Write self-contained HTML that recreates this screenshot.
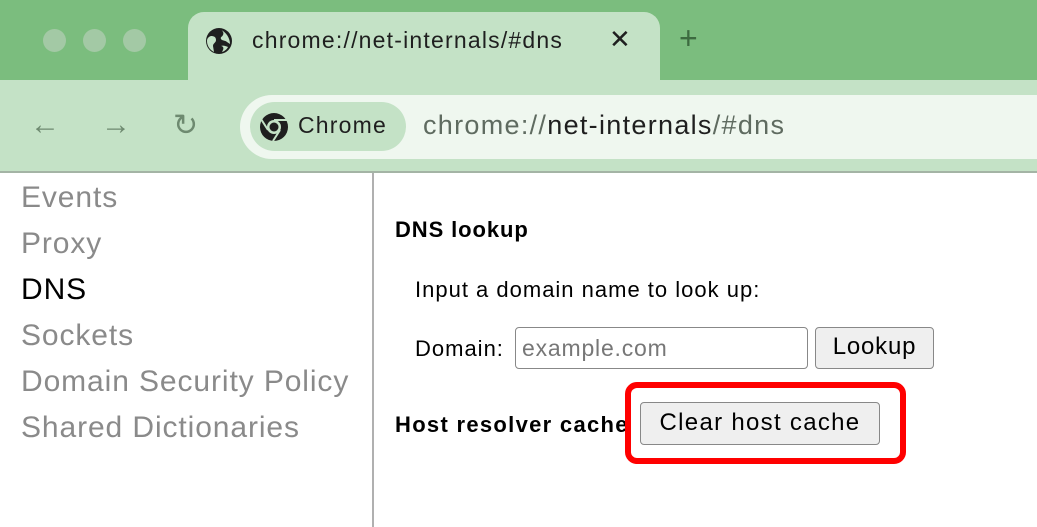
<!DOCTYPE html>
<html><head><style>
*{margin:0;padding:0;box-sizing:border-box}
body{width:1037px;height:527px;overflow:hidden;background:#fff;font-family:"Liberation Sans",sans-serif;position:relative}
.a{position:absolute;white-space:nowrap}
.dot{width:23px;height:23px;border-radius:50%;background:#a3c9a5;top:29px}
.side{left:21px;font-size:30px;letter-spacing:0.9px;color:#8a8a8a;line-height:46px}
</style></head><body>
<div class="a" style="left:0;top:0;width:1037px;height:80px;background:#7bbd7e"></div>
<div class="dot a" style="left:43px"></div><div class="dot a" style="left:83px"></div><div class="dot a" style="left:123px"></div>
<div class="a" style="left:188px;top:12px;width:472px;height:70px;background:#c4e2c6;border-radius:16px 16px 0 0"></div>
<svg class="a" style="left:205px;top:27px" width="28" height="28" viewBox="0 0 28 28"><circle cx="14" cy="14" r="13" fill="#1f1f1f"/><path d="M6 9c3 0 5 1 5 4s-3 3-3 6l1 6c-4-2-7-6-7-11 0-2 1-4 4-5zM16 3c2 1 3 3 2 5s-3 2-2 4 4 1 6 3l3 2c0-6-4-12-9-14zM16 19c2 0 3 2 2 4l-1 2c3-1 5-3 6-5-2-1-5-2-7-1z" fill="#c4e2c6"/></svg>
<div class="a" style="left:252px;top:27px;font-size:23px;letter-spacing:1.2px;color:#1f1f1f">chrome://net-internals/#dns</div>
<div class="a" style="left:609px;top:24px;font-size:26px;color:#1f1f1f">✕</div>
<div class="a" style="left:679px;top:20px;font-size:32px;color:#3d6b40">+</div>
<div class="a" style="left:0;top:80px;width:1037px;height:92px;background:#c4e2c6"></div>
<div class="a" style="left:0;top:171px;width:1037px;height:2px;background:#a4b4a5"></div>
<div class="a" style="left:30px;top:108px;font-size:30px;color:#6e8a70">←</div>
<div class="a" style="left:101px;top:108px;font-size:30px;color:#6e8a70">→</div>
<div class="a" style="left:173px;top:108px;font-size:30px;color:#6e8a70">↻</div>
<div class="a" style="left:240px;top:95px;width:830px;height:64px;background:#eff7ef;border-radius:32px"></div>
<div class="a" style="left:250px;top:102px;width:156px;height:49px;background:#c4e2c6;border-radius:25px"></div>
<svg class="a" style="left:259px;top:112px" width="30" height="30" viewBox="0 0 30 30"><circle cx="15" cy="15" r="14" fill="#1f1f1f"/><circle cx="15" cy="15" r="7" fill="#c4e2c6"/><circle cx="15" cy="15" r="4.5" fill="#1f1f1f"/><path d="M15 8h13M9 18L2 7M21 18l-7 11" stroke="#c4e2c6" stroke-width="2"/></svg>
<div class="a" style="left:298px;top:112px;font-size:23px;letter-spacing:1.2px;color:#1f1f1f">Chrome</div>
<div class="a" style="left:423px;top:110px;font-size:27px;letter-spacing:1.3px;color:#5f6b60">chrome://<span style="color:#1f1f1f">net-internals</span>/#dns</div>
<div class="a" style="left:372px;top:173px;width:2px;height:354px;background:#b0b0b0"></div>
<div class="a side" style="top:175px">Events<br>Proxy<br><span style="color:#000">DNS</span><br>Sockets<br>Domain Security Policy<br>Shared Dictionaries</div>
<div class="a" style="left:395px;top:217px;font-size:22px;letter-spacing:0.9px;font-weight:bold">DNS lookup</div>
<div class="a" style="left:415px;top:277px;font-size:22px;letter-spacing:1px">Input a domain name to look up:</div>
<div class="a" style="left:415px;top:336px;font-size:22px;letter-spacing:1px">Domain:</div>
<div class="a" style="left:515px;top:327px;width:293px;height:42px;border:1.5px solid #888;border-radius:4px;font-size:23px;letter-spacing:0.8px;color:#777;padding:7px 6px">example.com</div>
<div class="a" style="left:815px;top:327px;width:119px;height:42px;border:1.5px solid #888;border-radius:4px;background:#efefef;font-size:24px;letter-spacing:0.8px;text-align:center;line-height:38px">Lookup</div>
<div class="a" style="left:395px;top:412px;font-size:22px;letter-spacing:1.3px;font-weight:bold">Host resolver cache</div>
<div class="a" style="left:625px;top:382px;width:281px;height:82px;border:6px solid #f00;border-radius:12px;background:#fff"></div>
<div class="a" style="left:640px;top:402px;width:240px;height:43px;border:1.5px solid #888;border-radius:4px;background:#efefef;font-size:24px;letter-spacing:1.3px;text-align:center;line-height:40px">Clear host cache</div>
</body></html>
